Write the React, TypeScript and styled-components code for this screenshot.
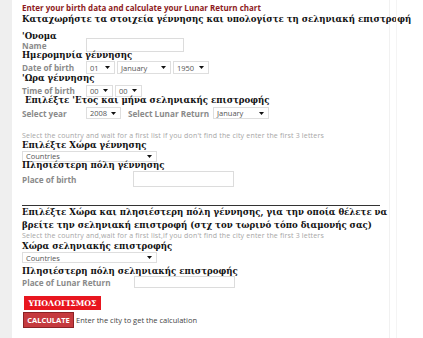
import styled, { createGlobalStyle } from 'styled-components';

const GlobalStyle = createGlobalStyle`
  html, body {
    margin: 0;
    padding: 0;
    background: #ffffff;
  }
`;

const Page = styled.div`
  display: flex;
  width: 423px;
  height: 338px;
  overflow: hidden;
  background: #ffffff;
`;

const Gutter = styled.div`
  width: 12px;
  flex: none;
  background: #efefef;
`;

const Panel = styled.div`
  width: 367px;
  flex: none;
  padding: 3px 0 0 10px;
  border-right: 1px solid #f1f1f1;
  display: flex;
  flex-direction: column;
`;

const Side = styled.div`
  width: 6px;
  flex: none;
  border-right: 1px solid #f4f4f4;
`;

const Title = styled.div`
  font-family: 'Open Sans', sans-serif;
  font-weight: 700;
  font-size: 8px;
  line-height: 10px;
  color: #8e1b22;
  white-space: nowrap;
`;

const Head = styled.div<{ $top?: number; $indent?: number }>`
  font-family: 'DejaVu Serif', serif;
  font-weight: 700;
  font-size: 8.6px;
  line-height: 9px;
  color: #111;
  white-space: nowrap;
  margin-top: ${p => p.$top ?? 0}px;
  padding-left: ${p => p.$indent ?? 0}px;
`;

const Para = styled.div`
  font-family: 'DejaVu Serif', serif;
  font-weight: 700;
  font-size: 8.6px;
  line-height: 13px;
  color: #111;
  width: 374px;
`;

const Row = styled.div<{ $h: number; $top?: number }>`
  display: flex;
  align-items: center;
  gap: 2px;
  height: ${p => p.$h}px;
  margin-top: ${p => p.$top ?? 0}px;
`;

const Label = styled.span<{ $w: number; $pad?: number }>`
  width: ${p => p.$w}px;
  flex: none;
  box-sizing: border-box;
  padding-left: ${p => p.$pad ?? 0}px;
  font-family: 'Open Sans', sans-serif;
  font-weight: 700;
  font-size: 8.2px;
  color: #8a8a8a;
  white-space: nowrap;
`;

const Input = styled.div<{ $w: number; $h: number }>`
  width: ${p => p.$w}px;
  height: ${p => p.$h}px;
  flex: none;
  box-sizing: border-box;
  border: 1px solid #dcdcdc;
  background: #fff;
`;

const SelectBox = styled.div<{ $w: number; $h: number }>`
  width: ${p => p.$w}px;
  height: ${p => p.$h}px;
  flex: none;
  box-sizing: border-box;
  border: 1px solid #dedede;
  display: flex;
  align-items: center;
  justify-content: space-between;
  padding: 0 4px 0 3px;
  font-family: 'Open Sans', sans-serif;
  font-size: 7.5px;
  color: #555;
`;

const Note = styled.div<{ $top: number }>`
  font-family: 'Open Sans', sans-serif;
  font-size: 7px;
  letter-spacing: 0.18px;
  line-height: 8px;
  color: #a6a6a6;
  white-space: nowrap;
  margin-top: ${p => p.$top}px;
`;

const Rule = styled.hr`
  width: 358px;
  height: 0;
  margin: 18px 0 0 0;
  border: none;
  border-top: 1px solid #333;
`;

const Banner = styled.div`
  align-self: flex-start;
  width: 77px;
  height: 14px;
  margin: 8px 0 0 2px;
  display: flex;
  align-items: center;
  justify-content: center;
  background: #e8161f;
  font-family: 'DejaVu Serif', serif;
  font-weight: 700;
  font-size: 7.8px;
  color: #fff;
  white-space: nowrap;
`;

const ActionRow = styled.div`
  display: flex;
  align-items: center;
  gap: 2px;
  margin: 2px 0 0 1px;
`;

const CalcButton = styled.button`
  width: 51px;
  height: 16px;
  padding: 0;
  border: 1px solid #8b2226;
  background: #c53a3e;
  font-family: 'Open Sans', sans-serif;
  font-weight: 700;
  font-size: 7.5px;
  color: #fff;
  cursor: pointer;
`;

const Hint = styled.span`
  font-family: 'Open Sans', sans-serif;
  font-size: 7.5px;
  color: #444;
`;

const Caret = () => (
  <svg width="5" height="3" viewBox="0 0 5 3">
    <path d="M0 0H5L2.5 3Z" fill="#111" />
  </svg>
);

const Select = ({ w, h = 12, value }: { w: number; h?: number; value: string }) => (
  <SelectBox $w={w} $h={h}>
    <span>{value}</span>
    <Caret />
  </SelectBox>
);

export default function App() {
  return (
    <>
      <GlobalStyle />
      <Page>
        <Gutter />
        <Panel>
          <Title>Enter your birth data and calculate your Lunar Return chart</Title>
          <Head $top={2}>Καταχωρήστε τα στοιχεία γέννησης και υπολογίστε τη σεληνιακή επιστροφή</Head>
          <Head $top={8}>'Ονομα</Head>
          <Row $h={14} $top={-3}>
            <Label $w={62}>Name</Label>
            <Input $w={98} $h={14} />
          </Row>
          <Head $top={-1}>Ημερομηνία γέννησης</Head>
          <Row $h={13} $top={1}>
            <Label $w={62}>Date of birth</Label>
            <Select w={29} h={13} value="01" />
            <Select w={54} h={13} value="January" />
            <Select w={36} h={13} value="1950" />
          </Row>
          <Head>'Ωρα γέννησης</Head>
          <Row $h={13} $top={1}>
            <Label $w={62}>Time of birth</Label>
            <Select w={27} value="00" />
            <Select w={27} value="00" />
          </Row>
          <Head $indent={3} $top={-1}>Επιλέξτε 'Ετος και μήνα σεληνιακής επιστροφής</Head>
          <Row $h={12} $top={2}>
            <Label $w={62}>Select year</Label>
            <Select w={35} value="2008" />
            <Label $w={88} $pad={5}>Select Lunar Return</Label>
            <Select w={56} value="January" />
          </Row>
          <Note $top={13}>Select the country and wait for a first list if you don't find the city enter the first 3 letters</Note>
          <Head $top={1}>Επιλέξτε Χώρα γέννησης</Head>
          <Row $h={10} $top={1}>
            <Select w={135} h={11} value="Countries" />
          </Row>
          <Head>Πλησιέστερη πόλη γέννησης</Head>
          <Row $h={16} $top={1}>
            <Label $w={109}>Place of birth</Label>
            <Input $w={101} $h={16} />
          </Row>
          <Rule />
          <Para>Επιλέξτε Χώρα και πλησιέστερη πόλη γέννησης, για την οποία θέλετε να βρείτε την σεληνιακή επιστροφή (στχ τον τωρινό τόπο διαμονής σας)</Para>
          <Note $top={0}>Select the country and,wait for a first list,if you don't find the city enter the first 3 letters</Note>
          <Head $top={2}>Χώρα σεληνιακής επιστροφής</Head>
          <Row $h={11} $top={1}>
            <Select w={135} h={11} value="Countries" />
          </Row>
          <Head $top={4}>Πλησιέστερη πόλη σεληνιακής επιστροφής</Head>
          <Row $h={12}>
            <Label $w={110}>Place of Lunar Return</Label>
            <Input $w={101} $h={12} />
          </Row>
          <Banner>ΥΠΟΛΟΓΙΣΜΟΣ</Banner>
          <ActionRow>
            <CalcButton>CALCULATE</CalcButton>
            <Hint>Enter the city to get the calculation</Hint>
          </ActionRow>
        </Panel>
        <Side />
      </Page>
    </>
  );
}
